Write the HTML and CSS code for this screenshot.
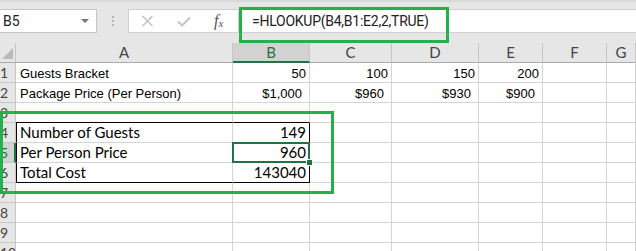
FILE: index.html
```html
<!DOCTYPE html>
<html lang="en">
<head>
    <meta charset="UTF-8">
    <title>HLOOKUP example</title>
    <link rel="stylesheet" href="styles.css">
</head>
<body>
    <div class="sheet">
        <div class="toolbar">
            <div class="namebox">
                <span>B5</span>
                <span class="caret"></span>
            </div>
            <div class="grip"><i></i><i></i><i></i></div>
            <div class="fxbar">
                <div class="fx-buttons">
                    <svg width="13" height="12" viewBox="0 0 13 12"><path d="M1.5 1 L11.5 11 M11.5 1 L1.5 11" stroke="#c4c4c4" stroke-width="1.6" fill="none"/></svg>
                    <svg width="14" height="11" viewBox="0 0 14 11"><path d="M1 5.5 L5 9.5 L13 1.5" stroke="#c4c4c4" stroke-width="2" fill="none"/></svg>
                    <span class="fx">f<sub>x</sub></span>
                </div>
                <div class="formula">=HLOOKUP(B4,B1:E2,2,TRUE)</div>
            </div>
        </div>

        <div class="grid">
            <!-- column headers -->
            <div class="c corner"><span class="tri"></span></div>
            <div class="c ch">A</div>
            <div class="c ch sel">B</div>
            <div class="c ch">C</div>
            <div class="c ch">D</div>
            <div class="c ch">E</div>
            <div class="c ch">F</div>
            <div class="c ch">G</div>

            <!-- row 1 -->
            <div class="c rh">1</div>
            <div class="c arial">Guests Bracket</div>
            <div class="c arial num">50</div>
            <div class="c arial num">100</div>
            <div class="c arial num">150</div>
            <div class="c arial num">200</div>
            <div class="c"></div>
            <div class="c"></div>

            <!-- row 2 -->
            <div class="c rh">2</div>
            <div class="c arial">Package Price (Per Person)</div>
            <div class="c arial num cur">$1,000</div>
            <div class="c arial num cur">$960</div>
            <div class="c arial num cur">$930</div>
            <div class="c arial num cur">$900</div>
            <div class="c"></div>
            <div class="c"></div>

            <!-- row 3 -->
            <div class="c rh">3</div>
            <div class="c b-bottom"></div>
            <div class="c b-bottom"></div>
            <div class="c"></div>
            <div class="c"></div>
            <div class="c"></div>
            <div class="c"></div>
            <div class="c"></div>

            <!-- row 4 -->
            <div class="c rh">4</div>
            <div class="c b-left">Number of Guests</div>
            <div class="c num b-right">149</div>
            <div class="c"></div>
            <div class="c"></div>
            <div class="c"></div>
            <div class="c"></div>
            <div class="c"></div>

            <!-- row 5 -->
            <div class="c rh sel">5</div>
            <div class="c b-left">Per Person Price</div>
            <div class="c num b-right active">960</div>
            <div class="c"></div>
            <div class="c"></div>
            <div class="c"></div>
            <div class="c"></div>
            <div class="c"></div>

            <!-- row 6 -->
            <div class="c rh">6</div>
            <div class="c b-left b-bottom">Total Cost</div>
            <div class="c num b-right b-bottom">143040</div>
            <div class="c"></div>
            <div class="c"></div>
            <div class="c"></div>
            <div class="c"></div>
            <div class="c"></div>

            <!-- rows 7 - 10 -->
            <div class="c rh">7</div>
            <div class="c"></div><div class="c"></div><div class="c"></div><div class="c"></div><div class="c"></div><div class="c"></div><div class="c"></div>
            <div class="c rh">8</div>
            <div class="c"></div><div class="c"></div><div class="c"></div><div class="c"></div><div class="c"></div><div class="c"></div><div class="c"></div>
            <div class="c rh">9</div>
            <div class="c"></div><div class="c"></div><div class="c"></div><div class="c"></div><div class="c"></div><div class="c"></div><div class="c"></div>
            <div class="c rh">10</div>
            <div class="c"></div><div class="c"></div><div class="c"></div><div class="c"></div><div class="c"></div><div class="c"></div><div class="c"></div>
        </div>

        <!-- highlight boxes drawn over the sheet -->
        <div class="mark mark-formula"></div>
        <div class="mark mark-table"></div>
    </div>
</body>
</html>
```

FILE: styles.css
```css
:root {
    --grid: #d4d4d4;
    --head: #e6e6e6;
    --excel: #217346;
    --mark: #22b14c;
}
body {
    margin: 0;
    background: #fff;
    font-family: 'Lato', sans-serif;
}
.sheet {
    position: relative;
    width: 636px;
    height: 251px;
    overflow: hidden;
}
.toolbar {
    height: 43px;
    box-sizing: border-box;
    background: #e6e6e6;
    border-top: 2px solid #d9d9d9;
    padding-top: 7px;
    display: flex;
    align-items: flex-start;
}
.namebox {
    width: 97px;
    height: 24px;
    box-sizing: border-box;
    background: #fff;
    border: 1px solid #c6c6c6;
    border-left: none;
    display: flex;
    align-items: center;
    justify-content: space-between;
    padding: 0 7px 0 3px;
    font-family: 'Roboto', sans-serif;
    font-size: 14px;
    color: #222;
}
.caret {
    width: 0;
    height: 0;
    border-left: 4px solid transparent;
    border-right: 4px solid transparent;
    border-top: 4px solid #777;
}
.grip {
    width: 31px;
    height: 24px;
    display: flex;
    flex-direction: column;
    align-items: center;
    justify-content: center;
    gap: 2px;
}
.grip i {
    width: 2px;
    height: 2px;
    background: #b4b4b4;
}
.fxbar {
    flex: 1;
    height: 24px;
    box-sizing: border-box;
    background: #fff;
    border-top: 1px solid #d0d0d0;
    border-bottom: 1px solid #d0d0d0;
    border-left: 1px solid #d0d0d0;
    display: flex;
}
.fx-buttons {
    width: 110px;
    box-sizing: border-box;
    border-right: 1px solid #d0d0d0;
    display: flex;
    align-items: center;
    padding-left: 12px;
    gap: 23px;
}
.fx {
    font-family: 'Liberation Serif', serif;
    font-style: italic;
    font-size: 16px;
    color: #555;
    margin-left: 0;
}
.fx sub {
    font-size: 11px;
    vertical-align: -1px;
}
.formula {
    padding-left: 13px;
    font-family: 'Roboto', sans-serif;
    font-size: 14px;
    letter-spacing: -0.25px;
    line-height: 22px;
    color: #222;
}
.grid {
    display: grid;
    grid-template-columns: 16px 217px 77px 82px 87px 64px 64px 29px;
    grid-auto-rows: 20px;
}
.c {
    box-sizing: border-box;
    border-right: 1px solid var(--grid);
    border-bottom: 1px solid var(--grid);
    padding: 0 3px 1px 4px;
    display: flex;
    align-items: flex-end;
    white-space: nowrap;
    overflow: visible;
    font-size: 15px;
    line-height: 17px;
    color: #000;
    position: relative;
}
.arial {
    font-family: 'Liberation Sans', sans-serif;
    font-size: 13px;
    line-height: 15px;
    padding-bottom: 1px;
}
.num {
    justify-content: flex-end;
}
.cur {
    padding-right: 7px;
}
.corner {
    background: var(--head);
    border-right-color: #c6c6c6;
    border-bottom-color: #ababab;
}
.tri {
    position: absolute;
    right: 2px;
    bottom: 3px;
    width: 0;
    height: 0;
    border-left: 11px solid transparent;
    border-bottom: 11px solid #b9b9b9;
}
.ch {
    background: var(--head);
    border-right-color: #c6c6c6;
    border-bottom-color: #ababab;
    justify-content: center;
    align-items: center;
    color: #444;
    padding: 0;
}
.ch.sel {
    background: #d2d2d2;
    color: var(--excel);
    border-bottom: 2px solid var(--excel);
}
.rh {
    background: var(--head);
    border-right-color: #c6c6c6;
    border-bottom-color: #c6c6c6;
    color: #444;
    font-size: 14px;
    padding: 0 0 1px 0;
    align-items: center;
    overflow: hidden;
}
.rh.sel {
    background: #d2d2d2;
    color: var(--excel);
    border-right: 2px solid var(--excel);
}
.b-left {
    border-left: 1px solid #000;
    padding-left: 3px;
}
.b-right {
    border-right-color: #000;
}
.b-bottom {
    border-bottom-color: #000;
}
.active::after {
    content: "";
    position: absolute;
    left: -1px;
    top: -1px;
    right: -1px;
    bottom: -1px;
    border: 2px solid var(--excel);
}
.active::before {
    content: "";
    position: absolute;
    right: -4px;
    bottom: -4px;
    width: 5px;
    height: 5px;
    background: var(--excel);
    border: 1px solid #fff;
    z-index: 1;
}
.mark {
    position: absolute;
    border: 3px solid var(--mark);
    box-sizing: border-box;
}
.mark-formula {
    left: 239px;
    top: 7px;
    width: 210px;
    height: 36px;
}
.mark-table {
    left: 0;
    top: 111px;
    width: 334px;
    height: 83px;
}
```
